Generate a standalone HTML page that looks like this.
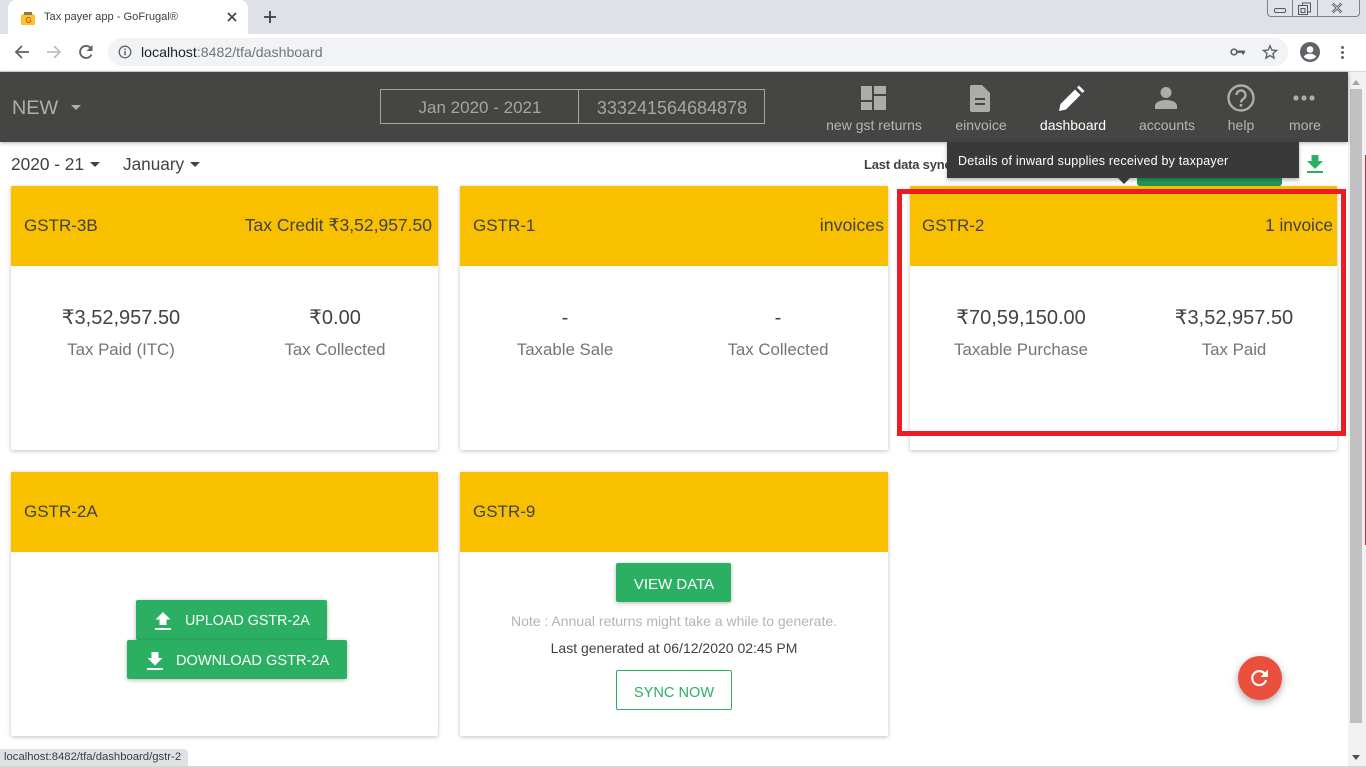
<!DOCTYPE html>
<html><head><meta charset="utf-8"><title>Tax payer app - GoFrugal®</title>
<style>
html,body{margin:0;padding:0;width:1366px;height:768px;overflow:hidden;background:#fff;font-family:"Liberation Sans","DejaVu Sans",sans-serif;color:#424242}
.a,.a *{box-sizing:border-box}
.a{position:absolute}
.t{position:absolute;white-space:nowrap;line-height:1}
.c{transform:translateX(-50%)}
.card{position:absolute;width:428px;background:#fff;border-radius:2px;box-shadow:0 1px 4px rgba(0,0,0,.25)}
.hd{position:absolute;left:0;top:0;width:100%;height:80px;background:#f9c000}
.btn{position:absolute;background:#2bb063;border-radius:2px;box-shadow:0 1px 4px rgba(0,0,0,.3)}
svg{position:absolute;display:block}
.nl{position:absolute;top:118px;font-size:14px;color:#b5b5b3;white-space:nowrap;line-height:1;transform:translateX(-50%)}
.lb{font-size:16.850px;color:#757575;top:342px}
</style></head><body>
<!-- browser chrome -->
<div class="a" style="left:0;top:0;width:1366px;height:34px;background:#dee1e6"></div>
<div class="a" style="left:8px;top:0;width:240px;height:34px;background:#fff;border-radius:8px 8px 0 0"></div>
<svg style="left:20px;top:11px" width="16" height="15" viewBox="0 0 16 15"><path d="M2 3h12l1 2v9H1V5z" fill="#f8c52c"/><rect x="4" y="1" width="8" height="3" fill="#8a7a50"/><text x="5.500" y="12" font-size="8" font-weight="bold" fill="#e25a1c" font-family="Liberation Sans">G</text></svg>
<div class="t" style="left:44px;top:12px;font-size:11.100px;color:#3c4043">Tax payer app - GoFrugal®</div>
<svg style="left:226px;top:11px" width="12" height="12" viewBox="0 0 12 12"><path d="M2 2l8 8M10 2l-8 8" stroke="#45484c" stroke-width="1.800"/></svg>
<svg style="left:263px;top:10px" width="14" height="14" viewBox="0 0 14 14"><path d="M7 1v12M1 7h12" stroke="#3c4043" stroke-width="1.800"/></svg>
<div class="a" style="left:1267px;top:0;width:93px;height:17px;background:#e0e3e8;border:1px solid #7d8084;border-top:0;border-radius:0 0 4px 4px"></div>
<div class="a" style="left:1292px;top:0;width:1px;height:16px;background:#7d8084"></div>
<div class="a" style="left:1317px;top:0;width:1px;height:16px;background:#7d8084"></div>
<div class="a" style="left:1274px;top:8px;width:12px;height:5px;border:1px solid #55585c;border-radius:2px"></div>
<svg style="left:1297px;top:2px" width="15" height="14" viewBox="0 0 15 14"><path d="M5.500 3V1h8v9h-3M1.500 3.500h9v9h-9zM4 6.500h4v4H4z" fill="none" stroke="#55585c"/></svg>
<svg style="left:1331px;top:2px" width="12" height="12" viewBox="0 0 12 12"><path d="M1.500 1.500l9 9M10.500 1.500l-9 9" stroke="#55585c" stroke-width="2.600"/><path d="M1.500 1.500l9 9M10.500 1.500l-9 9" stroke="#e0e3e8" stroke-width=".8"/></svg>
<div class="a" style="left:0;top:34px;width:1366px;height:38px;background:#fff"></div>
<svg style="left:14px;top:44px" width="16" height="16" viewBox="0 0 16 16"><path d="M15 8H2M8 2L2 8l6 6" fill="none" stroke="#5f6368" stroke-width="1.800"/></svg>
<svg style="left:46px;top:44px" width="16" height="16" viewBox="0 0 16 16"><path d="M1 8h13M8 2l6 6-6 6" fill="none" stroke="#bdc1c6" stroke-width="1.800"/></svg>
<svg style="left:78px;top:44px" width="16" height="16" viewBox="0 0 16 16"><path d="M13.500 10.500A6 6 0 1 1 13 4.500" fill="none" stroke="#5f6368" stroke-width="1.900"/><path d="M14.500 1v6h-6z" fill="#5f6368"/></svg>
<div class="a" style="left:108px;top:38px;width:1180px;height:28px;background:#f1f3f4;border-radius:14px"></div>
<svg style="left:118px;top:45px" width="14" height="14" viewBox="0 0 14 14"><circle cx="7" cy="7" r="5.800" fill="none" stroke="#5f6368" stroke-width="1.300"/><path d="M7 6v4.200M7 3.600v1.400" stroke="#5f6368" stroke-width="1.500"/></svg>
<div class="t" style="left:141px;top:45px;font-size:14.150px;color:#70757a"><span style="color:#202124">localhost</span>:8482/tfa/dashboard</div>
<svg style="left:1230px;top:46px" width="16" height="12" viewBox="0 0 16 12"><circle cx="4" cy="6" r="2.800" fill="none" stroke="#5f6368" stroke-width="1.700"/><path d="M6.500 4.500H15v2.500h-1v1.500h-2V7H6.500z" fill="#5f6368"/></svg>
<svg style="left:1262px;top:44px" width="16" height="16" viewBox="0 0 16 16"><path d="M8 1.800l1.900 4.300 4.600.4-3.500 3 1.100 4.500L8 11.600l-4.100 2.400L5 9.500l-3.500-3 4.600-.4z" fill="none" stroke="#5f6368" stroke-width="1.400"/></svg>
<svg style="left:1300px;top:42px" width="20" height="20" viewBox="0 0 20 20"><circle cx="10" cy="10" r="10" fill="#5f6368"/><circle cx="10" cy="7.500" r="3.300" fill="#fff"/><path d="M3.800 14.800c1.500-2.500 3.800-3 6.200-3s4.700.5 6.200 3c-1.500 1.800-3.700 2.700-6.200 2.700s-4.700-.9-6.200-2.700z" fill="#fff"/></svg>
<div class="a" style="left:1341px;top:46px;width:3px;height:3px;border-radius:50%;background:#5f6368"></div>
<div class="a" style="left:1341px;top:51px;width:3px;height:3px;border-radius:50%;background:#5f6368"></div>
<div class="a" style="left:1341px;top:56px;width:3px;height:3px;border-radius:50%;background:#5f6368"></div>
<div class="a" style="left:0;top:71px;width:1366px;height:1px;background:#d8d8d8"></div>

<!-- scrollbar -->
<div class="a" style="left:1348px;top:72px;width:18px;height:694px;background:#f1f1f1"></div>
<div class="a" style="left:1350px;top:89px;width:12px;height:634px;background:#c1c1c1"></div>
<div class="a" style="left:1352px;top:80px;width:0;height:0;border:4px solid transparent;border-top:0;border-bottom:5px solid #a3a3a3"></div>
<div class="a" style="left:1352px;top:755px;width:0;height:0;border:4px solid transparent;border-bottom:0;border-top:5px solid #505050"></div>
<div class="a" style="left:1365px;top:155px;width:1px;height:390px;background:#ed1c24"></div>

<!-- app bar -->
<div class="a" style="left:0;top:72px;width:1348px;height:70px;background:#454543;box-shadow:0 1px 4px rgba(0,0,0,.3)"></div>
<div class="t" style="left:12px;top:99px;font-size:19.800px;color:#aeaeac">NEW</div>
<div class="a" style="left:71px;top:105px;width:0;height:0;border:5.500px solid transparent;border-bottom:0;border-top:5px solid #aeaeac"></div>
<div class="a" style="left:380px;top:89px;width:385px;height:35px;border:1px solid #a5a5a3"></div>
<div class="a" style="left:578px;top:89px;width:1px;height:35px;background:#a5a5a3"></div>
<div class="t c" style="left:480px;top:99px;font-size:17px;color:#a5a5a3">Jan 2020 - 2021</div>
<div class="t c" style="left:672px;top:99px;font-size:18px;color:#a5a5a3">333241564684878</div>

<svg style="left:861px;top:86px" width="25" height="25" viewBox="0 0 25 25" fill="#acacaa"><rect x="0" y="0" width="11" height="14"/><rect x="13" y="0" width="12" height="8"/><rect x="13" y="10" width="12" height="14"/><rect x="0" y="16" width="11" height="8"/></svg>
<div class="nl" style="left:874px">new gst returns</div>
<svg style="left:969px;top:85px" width="22" height="27" viewBox="0 0 22 27"><path d="M3 0h10l8 8v17a2 2 0 0 1-2 2H3a2 2 0 0 1-2-2V2a2 2 0 0 1 2-2z" fill="#acacaa"/><path d="M6 14h10M6 19h10" stroke="#454543" stroke-width="2"/></svg>
<div class="nl" style="left:981px">einvoice</div>
<svg style="left:1059px;top:85px" width="26" height="26" viewBox="0 0 26 26"><path d="M0 26l1.500-7L16 4.500l5.500 5.500L7 24.500zM18 2.500l2-2 5.500 5.500-2 2z" fill="#fff"/></svg>
<div class="nl" style="left:1073px;color:#fff">dashboard</div>
<svg style="left:1155px;top:86px" width="22" height="24" viewBox="0 0 22 24" fill="#acacaa"><circle cx="11" cy="6.500" r="5.500"/><path d="M0 23v-3c0-4 6-6 11-6s11 2 11 6v3z"/></svg>
<div class="nl" style="left:1167px">accounts</div>
<svg style="left:1227px;top:84px" width="28" height="28" viewBox="0 0 28 28"><circle cx="14" cy="14" r="12.500" fill="none" stroke="#acacaa" stroke-width="2.400"/><path d="M9.500 11a4.500 4.500 0 1 1 7.200 3.600c-1.500 1.200-2.700 2-2.700 3.900" fill="none" stroke="#acacaa" stroke-width="2.400"/><rect x="12.700" y="20" width="2.600" height="2.600" fill="#acacaa"/></svg>
<div class="nl" style="left:1241px">help</div>
<svg style="left:1293px;top:95px" width="22" height="6" viewBox="0 0 22 6" fill="#acacaa"><circle cx="3" cy="3" r="2.600"/><circle cx="11" cy="3" r="2.600"/><circle cx="19" cy="3" r="2.600"/></svg>
<div class="nl" style="left:1305px">more</div>

<!-- toolbar row -->
<div class="t" style="left:11px;top:156px;font-size:17.300px;color:#424242">2020 - 21</div>
<div class="a" style="left:90px;top:162px;width:0;height:0;border:5.500px solid transparent;border-bottom:0;border-top:5px solid #424242"></div>
<div class="t" style="left:123px;top:156px;font-size:17.200px;color:#424242">January</div>
<div class="a" style="left:190px;top:162px;width:0;height:0;border:5.500px solid transparent;border-bottom:0;border-top:5px solid #424242"></div>
<div class="t" style="left:864px;top:158px;font-size:13px;font-weight:bold;color:#424242;letter-spacing:-.2px">Last data sync</div>
<svg style="left:1306px;top:155px" width="18" height="19" viewBox="0 0 18 19" fill="#2bb063"><path d="M5.500 0h7v6H17L9 14 1 6h4.500z"/><rect x="1" y="16" width="16" height="2"/></svg>
<div class="a" style="left:1137px;top:170px;width:145px;height:16px;background:#239a57;border-radius:0 0 3px 3px"></div>

<!-- cards -->
<div class="card" style="left:11px;top:186px;height:264px;width:427px"><div class="hd"></div></div>
<div class="t" style="left:24px;top:217px;font-size:17px">GSTR-3B</div>
<div class="t" style="right:934px;top:217px;font-size:17.500px">Tax Credit ₹3,52,957.50</div>
<div class="t c" style="left:121px;top:308px;font-size:20px">₹3,52,957.50</div>
<div class="t c lb" style="left:121px">Tax Paid (ITC)</div>
<div class="t c" style="left:335px;top:308px;font-size:20px">₹0.00</div>
<div class="t c lb" style="left:335px">Tax Collected</div>

<div class="card" style="left:460px;top:186px;height:264px"><div class="hd"></div></div>
<div class="t" style="left:473px;top:217px;font-size:17px">GSTR-1</div>
<div class="t" style="right:482px;top:217px;font-size:17.800px">invoices</div>
<div class="t c" style="left:565px;top:308px;font-size:20px">-</div>
<div class="t c lb" style="left:565px">Taxable Sale</div>
<div class="t c" style="left:778px;top:308px;font-size:20px">-</div>
<div class="t c lb" style="left:778px">Tax Collected</div>

<div class="card" style="left:910px;top:186px;height:264px;width:427px"><div class="hd"></div></div>
<div class="t" style="left:922px;top:217px;font-size:17px">GSTR-2</div>
<div class="t" style="right:33px;top:217px;font-size:17.200px">1 invoice</div>
<div class="t c" style="left:1021px;top:308px;font-size:20px">₹70,59,150.00</div>
<div class="t c lb" style="left:1021px">Taxable Purchase</div>
<div class="t c" style="left:1234px;top:308px;font-size:20px">₹3,52,957.50</div>
<div class="t c lb" style="left:1234px">Tax Paid</div>

<div class="card" style="left:11px;top:472px;height:264px;width:427px"><div class="hd"></div></div>
<div class="t" style="left:24px;top:503px;font-size:17px">GSTR-2A</div>
<div class="btn" style="left:136px;top:600px;width:191px;height:40px"></div>
<svg style="left:155px;top:612px" width="16" height="19" viewBox="0 0 16 19" fill="#fff"><path d="M8 0l7.500 7.500H11.500V13h-7V7.500H.500z"/><rect x="0" y="16" width="16" height="2"/></svg>
<div class="t" style="left:185px;top:614px;font-size:14.300px;color:#fff">UPLOAD GSTR-2A</div>
<div class="btn" style="left:127px;top:640px;width:220px;height:39px"></div>
<svg style="left:147px;top:652px" width="16" height="19" viewBox="0 0 16 19" fill="#fff"><path d="M4.500 0h7v6h4L8 13.500.500 6h4z"/><rect x="0" y="16" width="16" height="2"/></svg>
<div class="t" style="left:176px;top:654px;font-size:14.600px;color:#fff">DOWNLOAD GSTR-2A</div>

<div class="card" style="left:460px;top:472px;height:264px"><div class="hd"></div></div>
<div class="t" style="left:473px;top:503px;font-size:17px">GSTR-9</div>
<div class="btn" style="left:616px;top:563px;width:115px;height:39px"></div>
<div class="t c" style="left:674px;top:577px;font-size:15px;color:#fff">VIEW DATA</div>
<div class="t c" style="left:674px;top:614px;font-size:14px;color:#b4b4b4">Note : Annual returns might take a while to generate.</div>
<div class="t c" style="left:674px;top:641px;font-size:14px;color:#424242">Last generated at 06/12/2020 02:45 PM</div>
<div class="a" style="left:616px;top:670px;width:116px;height:40px;border:1px solid #2bb063;border-radius:2px"></div>
<div class="t c" style="left:674px;top:686px;font-size:14.600px;color:#2bb063">SYNC NOW</div>

<!-- highlight -->
<div class="a" style="left:897px;top:189px;width:449px;height:247px;border:5px solid #ed1c24"></div>

<!-- tooltip -->
<div class="a" style="left:947px;top:142px;width:352px;height:36px;background:#393939;box-shadow:0 2px 4px rgba(0,0,0,.3)"></div>
<div class="a" style="left:1118px;top:178px;width:0;height:0;border:6px solid transparent;border-bottom:0;border-top:6px solid #393939"></div>
<div class="t" style="left:958px;top:155px;font-size:12.500px;color:#fff;letter-spacing:.21px">Details of inward supplies received by taxpayer</div>

<!-- fab -->
<div class="a" style="left:1238px;top:656px;width:44px;height:44px;border-radius:50%;background:#ea4f3d;box-shadow:0 3px 8px rgba(0,0,0,.35)"></div>
<svg style="left:1250px;top:668px" width="20" height="20" viewBox="0 0 20 20"><path d="M16 12a7 7 0 1 1-1.500-6.500" fill="none" stroke="#fff" stroke-width="2.200"/><path d="M18 1.500V9h-7.500z" fill="#fff"/></svg>

<!-- status -->
<div class="a" style="left:0;top:749px;width:188px;height:17px;background:#dee1e6;border-radius:0 4px 0 0"></div>
<div class="t" style="left:4px;top:752px;font-size:11.300px;color:#3c4043">localhost:8482/tfa/dashboard/gstr-2</div>
<div class="a" style="left:0;top:766px;width:1366px;height:2px;background:#d8d6cc"></div>
</body></html>
